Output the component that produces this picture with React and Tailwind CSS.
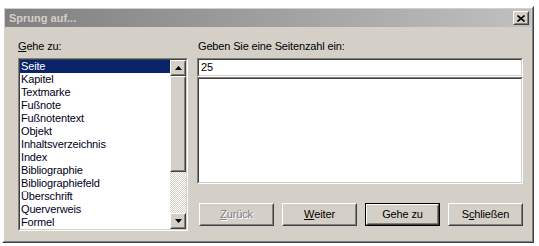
import React from 'react';

const items = [
  'Seite',
  'Kapitel',
  'Textmarke',
  'Fußnote',
  'Fußnotentext',
  'Objekt',
  'Inhaltsverzeichnis',
  'Index',
  'Bibliographie',
  'Bibliographiefeld',
  'Überschrift',
  'Querverweis',
  'Formel',
];

// classic 3D frames
const raisedOuter = 'border border-t-white border-l-white border-r-[#404040] border-b-[#404040]';
const raisedInner = 'border border-t-[#d4d0c8] border-l-[#d4d0c8] border-r-[#808080] border-b-[#808080]';
const sunkenOuter = 'border border-t-[#808080] border-l-[#808080] border-r-white border-b-white';
const sunkenInner = 'border border-t-[#404040] border-l-[#404040] border-r-[#d4d0c8] border-b-[#d4d0c8]';

function Arrow({ up }) {
  return (
    <svg width="7" height="4" viewBox="0 0 7 4">
      {up ? <path d="M3.5 0 L7 4 L0 4 Z" fill="#000" /> : <path d="M0 0 L7 0 L3.5 4 Z" fill="#000" />}
    </svg>
  );
}

function ScrollButton({ up }) {
  return (
    <div className={`${raisedOuter} w-[16px] h-[16px] bg-[#d4d0c8]`}>
      <div className={`${raisedInner} w-full h-full flex items-center justify-center`}>
        <Arrow up={up} />
      </div>
    </div>
  );
}

function Button({ children, disabled, isDefault }) {
  const inner = (
    <div className={`${raisedOuter} w-full h-full bg-[#d4d0c8]`}>
      <div
        className={`${raisedInner} w-full h-full flex items-center justify-center ${
          disabled ? 'text-[#808080] [text-shadow:1px_1px_0_#fff]' : 'text-black'
        }`}
      >
        {children}
      </div>
    </div>
  );
  if (isDefault) {
    return <div className="w-[75px] h-[23px] border border-black">{inner}</div>;
  }
  return <div className="w-[75px] h-[23px]">{inner}</div>;
}

export default function App() {
  return (
    <div className="w-[539px] h-[246px] bg-white pt-[6px] pl-[2px] font-['Liberation_Sans',Arial,sans-serif] text-[11px] leading-[13px] tracking-[-0.15px]">
      <div className={`${raisedOuter} border-t-[#d4d0c8] border-l-[#d4d0c8] w-[532px] h-[237px]`}>
        <div className={`border border-t-white border-l-white border-r-[#808080] border-b-[#808080] w-full h-full bg-[#d4d0c8] p-[1px] flex flex-col`}>
          {/* Titelleiste */}
          <div className="h-[18px] flex items-center justify-between pl-[4px] pr-[2px] bg-gradient-to-r from-[#808080] to-[#c0c0c0]">
            <span className="font-bold text-[#d4d0c8] tracking-normal">Sprung auf...</span>
            <div className={`${raisedOuter} w-[16px] h-[14px] bg-[#d4d0c8]`}>
              <div className={`${raisedInner} w-full h-full flex items-center justify-center`}>
                <svg width="8" height="7" viewBox="0 0 8 7">
                  <path d="M0.5 0.5 L7.5 6.5 M7.5 0.5 L0.5 6.5" stroke="#000" strokeWidth="1.6" />
                </svg>
              </div>
            </div>
          </div>

          {/* Inhalt */}
          <div className="flex gap-[9px] pl-[13px] pt-[13px]">
            <div className="w-[170px] flex flex-col">
              <div className="h-[13px] text-black">
                <span className="underline underline-offset-1">G</span>ehe zu:
              </div>
              <div className={`${sunkenOuter} mt-[5px] w-[170px] h-[173px]`}>
                <div className={`${sunkenInner} w-full h-full bg-white flex`}>
                  <div className="flex-1 flex flex-col">
                    {items.map((it, i) => (
                      <div
                        key={it}
                        className={`h-[13px] pl-[1px] ${i === 0 ? 'bg-[#0a246a] text-white' : 'text-[#000020]'}`}
                      >
                        {it}
                      </div>
                    ))}
                  </div>
                  <div className="w-[16px] flex flex-col">
                    <ScrollButton up />
                    <div className={`${raisedOuter} h-[96px] bg-[#d4d0c8]`}>
                      <div className={`${raisedInner} w-full h-full`} />
                    </div>
                    <div className="flex-1 bg-[image:conic-gradient(#d4d0c8_25%,#fff_0_50%,#d4d0c8_0_75%,#fff_0)] bg-[length:2px_2px]" />
                    <ScrollButton />
                  </div>
                </div>
              </div>
            </div>

            <div className="w-[326px] flex flex-col">
              <div className="h-[13px] pl-[1px] text-black">Geben Sie eine Seitenzahl ein:</div>
              <div className={`${sunkenOuter} mt-[5px] h-[19px]`}>
                <div className={`${sunkenInner} w-full h-full bg-white flex items-center pl-[2px] text-black`}>25</div>
              </div>
              <div className={`${sunkenOuter} h-[107px]`}>
                <div className={`${sunkenInner} w-full h-full bg-white`} />
              </div>
              <div className="flex justify-end gap-[8px] mt-[19px]">
                <Button disabled>
                  <span className="underline underline-offset-1">Z</span>urück
                </Button>
                <Button>
                  <span className="underline underline-offset-1">W</span>eiter
                </Button>
                <Button isDefault>Gehe zu</Button>
                <Button>
                  S<span className="underline underline-offset-1">c</span>hließen
                </Button>
              </div>
            </div>
          </div>
        </div>
      </div>
    </div>
  );
}
